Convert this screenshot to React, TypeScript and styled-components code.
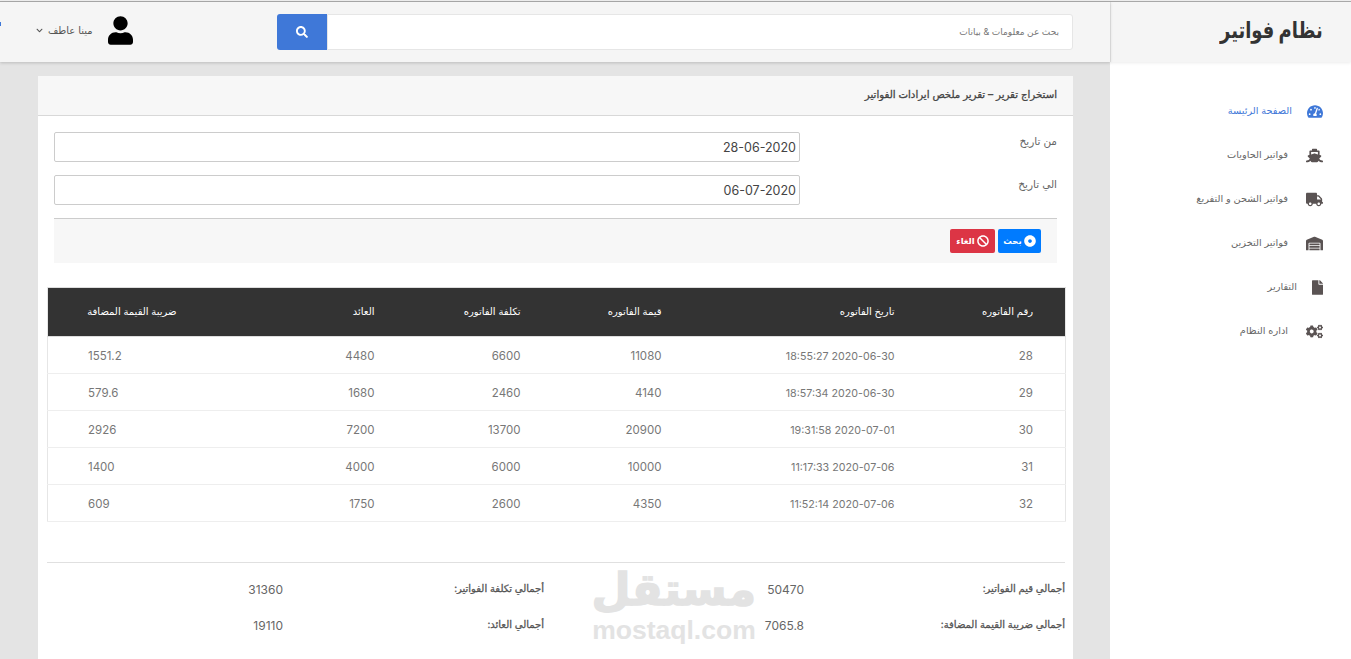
import React from 'react';
import styled, { createGlobalStyle } from 'styled-components';
import { FaTachometerAlt, FaShip, FaTruck, FaWarehouse, FaFile, FaCogs, FaUser, FaSearch, FaBan, FaDotCircle, FaChevronDown } from 'react-icons/fa';

const Global = createGlobalStyle`
  html, body { margin: 0; padding: 0; height: 100%; overflow: hidden; background: #e4e4e4; }
  * { box-sizing: border-box; }
  body { font-family: Inter, "Liberation Sans", "DejaVu Sans", sans-serif; font-size: 12px; color: #555; }
`;

const Page = styled.div`
  direction: rtl; display: flex; width: 1351px; height: 659px; overflow: hidden; position: relative;
  padding-top: 2px; background: linear-gradient(#eee 1px, #aaa 1px, #aaa 2px, #e4e4e4 2px);
`;
const Sidebar = styled.aside`width: 241px; flex: none; background: #fff; display: flex; flex-direction: column;`;
const Brand = styled.div`
  height: 60px; background: #f5f5f5; padding: 0 28px 5px; display: flex; align-items: center;
  border-left: 1px solid #e6e6e6; box-shadow: 0 1px 3px rgba(0,0,0,.08);
`;
const BrandText = styled.span`
  font-size: 23px; font-weight: 700; color: #333; display: inline-block; transform: scaleX(.78); transform-origin: right center; white-space: nowrap;
`;
const Nav = styled.nav`display: flex; flex-direction: column; padding-top: 27px;`;
const NavItem = styled.a<{ $active?: boolean; $iw: number; $gap: number }>`
  height: 44px; padding: 0 28px; display: flex; align-items: center; gap: ${p => p.$gap}px; font-size: 9.8px;
  color: ${p => p.$active ? '#3f78d8' : '#666'};
  svg { color: ${p => p.$active ? '#3f78d8' : '#5a5353'}; width: ${p => p.$iw}px; height: 15px; flex: none; }
`;
const NavLabel = styled.span`margin-top: -1px;`;
const Main = styled.main`flex: 1; min-width: 0; display: flex; flex-direction: column;`;
const Topbar = styled.header`
  height: 60px; flex: none; background: #f5f5f5; box-shadow: 0 1px 3px rgba(0,0,0,.18); display: flex; align-items: center;
  padding: 0 37px 0 36px; position: relative;
`;
const SearchBox = styled.div`width: 796px; height: 36px; display: flex; flex: none;`;
const SearchInput = styled.div`
  flex: 1; background: #fff; border: 1px solid #e6e6e6; border-radius: 0 3px 3px 0; padding: 0 13px 2px; display: flex; align-items: center;
  font-size: 9px; color: #777;
`;
const SearchButton = styled.button`
  width: 50px; border: 0; background: #3f78d8; color: #fff; border-radius: 3px 0 0 3px; display: flex; align-items: center; justify-content: center; font-size: 12px; padding: 0;
`;
const User = styled.div`margin-right: auto; margin-bottom: 4px; display: flex; align-items: center; gap: 15px; color: #555; font-size: 10px;`;
const Avatar = styled.span`color: #000; display: flex; svg { display: block; width: 25px; height: 29px; }`;
const UserName = styled.span`display: flex; align-items: center; gap: 5px; svg { font-size: 7px; }`;
const Marker = styled.span`position: absolute; left: 0; top: 20px; width: 1px; height: 4px; background: #3f78d8;`;
const Content = styled.div`padding: 14px 37px 0 38px; flex: 1;`;
const Card = styled.section`background: #fff; border-radius: 3px 3px 0 0; height: 600px;`;
const CardHead = styled.div`
  height: 40px; background: #f7f7f7; border-bottom: 1px solid #d8d8d8; padding: 0 16px 4px; display: flex; align-items: center;
  font-size: 10.2px; color: #444; -webkit-text-stroke: .3px #444;
`;
const FormArea = styled.div`padding: 16px 16px 0;`;
const FormRow = styled.div`display: flex; justify-content: space-between; height: 43px;`;
const FieldLabel = styled.label`font-size: 10.5px; color: #666; padding-top: 3px;`;
const DateField = styled.div`
  width: 746px; height: 30px; border: 1px solid #ccc; border-radius: 2px; padding: 0 3px; display: flex; align-items: center;
  font-size: 12.5px; color: #444; direction: ltr; justify-content: flex-end;
`;
const Actions = styled.div`
  height: 45px; background: #f7f7f7; border-top: 1px solid #ccc; padding: 0 16px; display: flex; align-items: center; gap: 3px;
`;
const ActionButton = styled.button<{ $tone: string; $w: number }>`
  width: ${p => p.$w}px; height: 24px; border: 0; border-radius: 2px; background: ${p => p.$tone}; color: #fff; display: flex; align-items: center; justify-content: center;
  gap: 2px; font: 700 8.5px Inter, "Liberation Sans", "DejaVu Sans", sans-serif; padding: 0; svg { font-size: 12px; }
`;
const TableWrap = styled.div`padding: 24px 7px 0 9px;`;
const Table = styled.table`
  width: 1018px; table-layout: fixed; border-collapse: collapse; border: 1px solid #e6e6e6; border-top: 1px solid #ddd;
`;
const Th = styled.th`
  height: 49px; background: #333; color: #fff; font-size: 10px; font-weight: 400; text-align: right; padding: 0 32px 3px 0; border-bottom: 1px solid #ddd;
`;
const Td = styled.td<{ $kind: string }>`
  height: 37px; border-bottom: 1px solid #eee; color: #777; font-weight: 400; padding-top: 3px;
  font-size: ${p => p.$kind === 'date' ? '10.7px' : '11.5px'};
  text-align: ${p => p.$kind === 'last' ? 'left' : 'right'};
  padding-right: ${p => p.$kind === 'last' ? '0' : '32px'};
  padding-left: ${p => p.$kind === 'last' ? '40px' : '0'};
`;
const Totals = styled.div`
  margin: 40px 8px 0 9px; border-top: 1px solid #e0e0e0; padding-top: 8px; display: grid; grid-template-columns: 261px 260px 261px 1fr; grid-auto-rows: 36px; align-items: center;
`;
const TotalLabel = styled.div`font-size: 10px; color: #555; -webkit-text-stroke: .3px #555; margin-top: -3px;`;
const TotalValue = styled.div`font-size: 12px; color: #666;`;
const Watermark = styled.div`
  position: absolute; left: 592px; top: 565px; width: 164px; text-align: center; color: #e3e3e3; pointer-events: none;
`;
const WatermarkAr = styled.div`font-size: 45px; font-weight: 700; line-height: 50px; font-family: "DejaVu Sans", sans-serif; white-space: nowrap; -webkit-text-stroke: 1.5px #e3e3e3;`;
const WatermarkEn = styled.div`font: 700 26.5px/30px "Liberation Sans", sans-serif; direction: ltr; white-space: nowrap;`;

const nav = [
  { label: 'الصفحة الرئيسة', Icon: FaTachometerAlt, active: true, iw: 16, gap: 15 },
  { label: 'فواتير الحاويات', Icon: FaShip, iw: 17, gap: 18 },
  { label: 'فواتير الشحن و التفريغ', Icon: FaTruck, iw: 17, gap: 18 },
  { label: 'فواتير التخزين', Icon: FaWarehouse, iw: 17, gap: 18 },
  { label: 'التقارير', Icon: FaFile, iw: 11, gap: 15 },
  { label: 'اداره النظام', Icon: FaCogs, iw: 17, gap: 18 },
];
const cols = [139, 233, 141, 146, 198, 161];
const heads = ['رقم الفاتوره', 'تاريخ الفاتوره', 'قيمة الفاتوره', 'تكلفة الفاتوره', 'العائد', 'ضريبة القيمة المضافة'];
const rows = [
  ['28', '2020-06-30 18:55:27', '11080', '6600', '4480', '1551.2'],
  ['29', '2020-06-30 18:57:34', '4140', '2460', '1680', '579.6'],
  ['30', '2020-07-01 19:31:58', '20900', '13700', '7200', '2926'],
  ['31', '2020-07-06 11:17:33', '10000', '6000', '4000', '1400'],
  ['32', '2020-07-06 11:52:14', '4350', '2600', '1750', '609'],
];
const kindOf = (i: number) => (i === 1 ? 'date' : i === 5 ? 'last' : 'num');

export default function App() {
  return (
    <Page>
      <Global />
      <Sidebar>
        <Brand><BrandText>نظام فواتير</BrandText></Brand>
        <Nav>
          {nav.map(({ label, Icon, active, iw, gap }) => (
            <NavItem key={label} $active={active} $iw={iw} $gap={gap}><Icon /><NavLabel>{label}</NavLabel></NavItem>
          ))}
        </Nav>
      </Sidebar>
      <Main>
        <Topbar>
          <SearchBox>
            <SearchInput>بحث عن معلومات &amp; بيانات</SearchInput>
            <SearchButton aria-label="بحث"><FaSearch /></SearchButton>
          </SearchBox>
          <User>
            <Avatar><FaUser /></Avatar>
            <UserName>مينا عاطف <FaChevronDown /></UserName>
          </User>
          <Marker />
        </Topbar>
        <Content>
          <Card>
            <CardHead>استخراج تقرير – تقرير ملخص ايرادات الفواتير</CardHead>
            <FormArea>
              <FormRow><FieldLabel>من تاريخ</FieldLabel><DateField>28-06-2020</DateField></FormRow>
              <FormRow><FieldLabel>الي تاريخ</FieldLabel><DateField>06-07-2020</DateField></FormRow>
              <Actions>
                <ActionButton $tone="#007bff" $w={43}><FaDotCircle />بحث</ActionButton>
                <ActionButton $tone="#dc3545" $w={45}><FaBan />الغاء</ActionButton>
              </Actions>
            </FormArea>
            <TableWrap>
              <Table>
                <colgroup>{cols.map((w, i) => <col key={i} width={w} />)}</colgroup>
                <thead><tr>{heads.map(h => <Th key={h}>{h}</Th>)}</tr></thead>
                <tbody>
                  {rows.map(r => <tr key={r[0]}>{r.map((c, i) => <Td key={i} $kind={kindOf(i)}>{c}</Td>)}</tr>)}
                </tbody>
              </Table>
            </TableWrap>
            <Totals>
              <TotalLabel>أجمالي قيم الفواتير:</TotalLabel><TotalValue>50470</TotalValue>
              <TotalLabel>أجمالي تكلفة الفواتير:</TotalLabel><TotalValue>31360</TotalValue>
              <TotalLabel>أجمالي ضريبة القيمة المضافة:</TotalLabel><TotalValue>7065.8</TotalValue>
              <TotalLabel>أجمالي العائد:</TotalLabel><TotalValue>19110</TotalValue>
            </Totals>
          </Card>
        </Content>
      </Main>
      <Watermark>
        <WatermarkAr>مستقل</WatermarkAr>
        <WatermarkEn>mostaql.com</WatermarkEn>
      </Watermark>
    </Page>
  );
}
